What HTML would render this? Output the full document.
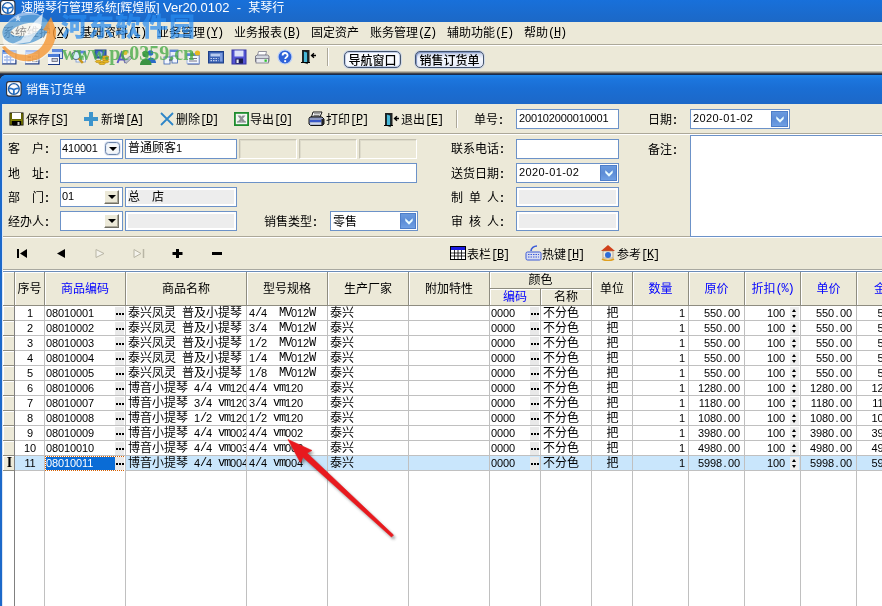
<!DOCTYPE html><html><head><meta charset="utf-8"><title>销售订货单</title><style>
*{box-sizing:border-box;margin:0;padding:0}
html,body{width:882px;height:606px;overflow:hidden;background:#ECE9D8}
body{will-change:transform;position:relative;font-family:"Liberation Sans","Noto Sans CJK SC",sans-serif;font-size:12px;color:#000;line-height:14px}
.a{position:absolute}
.t{position:absolute;white-space:nowrap;height:14px;line-height:14px;font-size:12px}
.sp{display:inline-block;width:6px}
.co{display:inline-block;width:6px;text-align:center;font-weight:bold}
.titlebar{left:0;top:0;width:882px;height:22px;background:linear-gradient(#1870DA,#1A6CD0 50%,#1C68C6)}
.inp{position:absolute;border:1px solid #6C92C8;background:#fff;height:20px;white-space:nowrap;overflow:hidden;line-height:17px;padding-left:2px;font-size:12px}
.inp.g{background:#EDEDED;box-shadow:inset 0 0 0 2px #fff}
.inp.n{font-size:11px}
.dis{position:absolute;height:20px;border:1px solid;border-color:#C5C2B2 #fff #fff #C5C2B2;background:#ECE9D8;box-shadow:inset 1px 1px 0 #DEDBCB}
.xpbtn{position:absolute;width:17px;height:16px;border:1px solid #4E7EC8;background:linear-gradient(#6A9ADE,#5C8CD6 50%,#6FA0E4)}
.xpbtn svg{position:absolute;left:3.500px;top:4px}
.clbtn{position:absolute;width:15px;height:14px;background:#ECE9D8;border:1px solid;border-color:#fff #716F64 #716F64 #fff;box-shadow:inset -1px -1px 0 #ACA899}
.clbtn:after{content:"";position:absolute;left:3px;top:4px;border:4px solid transparent;border-top:4px solid #000;border-bottom:0}
.hd{position:absolute;background:#ECE9D8;border-right:1px solid #8E8C80;border-bottom:1px solid #8E8C80;box-shadow:inset 1px 1px 0 #fff;text-align:center;font-size:12px;white-space:nowrap;overflow:hidden}
.blue{color:#0000FF}
.row{position:absolute;left:3px;width:879px;height:15px;border-bottom:1px solid #C0C0C0}
.row.sel{background:#C9E6FC}
.c{position:absolute;top:0;height:14px;line-height:15px;white-space:nowrap;overflow:hidden;font-size:12px}
.r{text-align:right}
.ctr{text-align:center}
.dots{position:absolute;top:1px;width:9px;height:13px;background:#E9E9E9}
.dots i{position:absolute;top:6px;width:2px;height:2px;background:#000}
.spn{position:absolute;left:787px;top:1px;width:9px;height:13px;background:#EFEFEF}
.spn:before{content:"";position:absolute;left:2px;top:2px;border:2.5px solid transparent;border-bottom:3px solid #000;border-top:0}
.spn:after{content:"";position:absolute;left:2px;top:8px;border:2.5px solid transparent;border-top:3px solid #000;border-bottom:0}
.vl{position:absolute;width:1px;background:#C0C0C0}
.tb{position:absolute;width:16px;height:16px;top:49px}
.m{font-family:"Liberation Mono","Noto Sans CJK SC",monospace;font-size:12px;letter-spacing:-1.2px;vertical-align:1px}
.d{font-family:"Liberation Sans",sans-serif;font-size:11px;letter-spacing:-.117px}
.dt{display:inline-block;width:6px;text-align:center;letter-spacing:0}
</style></head><body>
<div class="a titlebar"></div>
<svg class="a" style="left:0px;top:-0.5px" width="15.5" height="15.5" viewBox="0 0 16 16"><rect x=".6" y=".6" width="14.800" height="14.800" rx="2.600" fill="#FAFBFD" stroke="#2A2E3A" stroke-width="1.100"/><circle cx="8" cy="8.200" r="5.500" fill="none" stroke="#1C5CA8" stroke-width="1.400"/><path d="M2.900 7.700C5 7 6.500 7.900 8 9 9.500 7.900 11 7 13.100 7.700M8 9v4.600" stroke="#2470C8" stroke-width="1.800" fill="none"/></svg>
<div class="t" style="left:21px;top:0;color:#fff;height:16px;line-height:16px;font-size:12px">速腾琴行管理系统[辉煌版] <span style="font-size:13px">Ver20.0102&nbsp; -&nbsp; </span>某琴行</div>
<div class="a" style="left:0;top:44px;width:882px;height:1px;background:#ACA899"></div>
<div class="a" style="left:0;top:45px;width:882px;height:1px;background:#fff"></div>
<div class="t" style="left:3px;top:26px">系统维护<span class="m">(<u>X</u>)</span></div>
<div class="t" style="left:80px;top:26px">基础资料<span class="m">(<u>I</u>)</span></div>
<div class="t" style="left:157px;top:26px">业务管理<span class="m">(<u>Y</u>)</span></div>
<div class="t" style="left:234px;top:26px">业务报表<span class="m">(<u>B</u>)</span></div>
<div class="t" style="left:311px;top:26px">固定资产</div>
<div class="t" style="left:370px;top:26px">账务管理<span class="m">(<u>Z</u>)</span></div>
<div class="t" style="left:447px;top:26px">辅助功能<span class="m">(<u>F</u>)</span></div>
<div class="t" style="left:524px;top:26px">帮助<span class="m">(<u>H</u>)</span></div>
<svg class="tb" style="left:1px" viewBox="0 0 16 16"><rect x="1" y="1" width="14.500" height="14.500" fill="#1C3A84"/><rect x="1" y="1" width="13.300" height="13.300" fill="#F6F8FE"/><rect x="1" y="1" width="13.300" height="2" fill="#3E70D2"/><rect x="1" y="3" width="13.300" height="2" fill="#7FA6EA"/><rect x="1" y="1" width="1" height="13.300" fill="#8CAAE4"/><path d="M3 8h10M3 11h10M6 6v8M9.500 6v8" stroke="#A4BCEC" stroke-width="1.300"/></svg>
<svg class="tb" style="left:24px" viewBox="0 0 16 16"><rect x="1" y="1" width="14.500" height="14.500" fill="#1C3A84"/><rect x="1" y="1" width="13.300" height="13.300" fill="#F6F8FE"/><rect x="1" y="1" width="13.300" height="2" fill="#3E70D2"/><rect x="1" y="3" width="13.300" height="2" fill="#7FA6EA"/><rect x="1" y="1" width="1" height="13.300" fill="#8CAAE4"/><path d="M3.500 8h3.500M3.500 11.500h3.500" stroke="#333" stroke-width="1.300"/><rect x="8.500" y="7" width="4.500" height="2.200" fill="#fff" stroke="#555" stroke-width=".7"/><rect x="8.500" y="10.500" width="4.500" height="2.200" fill="#fff" stroke="#555" stroke-width=".7"/></svg>
<svg class="tb" style="left:47px" viewBox="0 0 16 16"><rect x="5" y="0" width="11" height="10" fill="#3A5CA8"/><rect x="5" y="0" width="10" height="9" fill="#D4E0F6"/><rect x="5" y="0" width="10" height="3" fill="#5B86DE"/><rect x="1" y="5" width="12" height="11" fill="#1C3A84"/><rect x="1" y="5" width="11" height="10" fill="#F6F8FE"/><rect x="1" y="5" width="11" height="3" fill="#4C7CD8"/><rect x="5" y="9.500" width="5.500" height="3" fill="#C4CCDC" stroke="#556" stroke-width=".7"/></svg>
<svg class="tb" style="left:70px" viewBox="0 0 16 16"><rect x="6" y="2" width="9.500" height="11" fill="#F2F6FD" stroke="#7C98D0" stroke-width=".8"/><rect x="6" y="2" width="9.500" height="2.500" fill="#5B86DE"/><rect x="10" y="7" width="4" height="4" fill="#9CCC9C"/><circle cx="6" cy="6.500" r="4" fill="#D6ECFC" stroke="#5A7088" stroke-width="1.200"/><path d="M8.800 9.500l4 4.500" stroke="#C8961E" stroke-width="2.600"/></svg>
<svg class="tb" style="left:94px" viewBox="0 0 16 16"><rect x="1" y="1" width="11" height="8" fill="#3C66C0" stroke="#1D3F88"/><circle cx="6" cy="5" r="2.500" fill="#8CB0E8"/><ellipse cx="11.500" cy="8" rx="3.500" ry="1.300" fill="#E8B820" stroke="#A87C10" stroke-width=".5"/><ellipse cx="11.500" cy="10.300" rx="3.500" ry="1.300" fill="#E8B820" stroke="#A87C10" stroke-width=".5"/><ellipse cx="11.500" cy="12.600" rx="3.500" ry="1.300" fill="#E8B820" stroke="#A87C10" stroke-width=".5"/><ellipse cx="4.500" cy="12.500" rx="3.200" ry="1.200" fill="#E8B820" stroke="#A87C10" stroke-width=".5"/><ellipse cx="8" cy="14.500" rx="3.200" ry="1.200" fill="#E8B820" stroke="#A87C10" stroke-width=".5"/></svg>
<svg class="tb" style="left:116px" viewBox="0 0 16 16"><path d="M1.500 14l4-10 4 10M3 10.500h5" stroke="#5A58C8" stroke-width="2" fill="none"/><path d="M8 12l6-5 2 2-6 5.500z" fill="#B8C0D0" stroke="#667" stroke-width=".6"/><circle cx="9" cy="3.500" r="2.500" fill="#D8C030"/></svg>
<svg class="tb" style="left:140px" viewBox="0 0 16 16"><circle cx="10.500" cy="4" r="2.800" fill="#2C6CC8"/><path d="M6 14c0-7 10-7 10 0z" fill="#2C6CC8"/><circle cx="5.500" cy="5" r="3.200" fill="#3C9444"/><path d="M0 16c0-8 11.500-8 11.500 0z" fill="#3C9444"/></svg>
<svg class="tb" style="left:163px" viewBox="0 0 16 16"><rect x="7" y="1" width="8" height="7" fill="#E8EEFA" stroke="#5878BC" stroke-width=".8"/><rect x="7" y="1" width="8" height="2" fill="#5B86DE"/><rect x="1" y="8" width="6" height="7" fill="#F2F6FD" stroke="#3B62B0" stroke-width=".8"/><rect x="9" y="7" width="5.500" height="7" fill="#F2F6FD" stroke="#3B62B0" stroke-width=".8"/><path d="M6 11h3" stroke="#345" stroke-width="1"/></svg>
<svg class="tb" style="left:186px" viewBox="0 0 16 16"><rect x="1.500" y="5.500" width="12" height="10" fill="#1E3C8C"/><rect x="1" y="4.500" width="12" height="10" fill="#F2F6FD" stroke="#8FA8DC" stroke-width=".8"/><rect x="1" y="4.500" width="12" height="2.500" fill="#5B86DE"/><path d="M3 9.500h8M3 12h8" stroke="#778" stroke-width="1"/><circle cx="11.500" cy="4" r="2.600" fill="#E8B820"/><path d="M6.500 2l2 5h-4z" fill="#6C9C3C"/></svg>
<svg class="tb" style="left:208px" viewBox="0 0 16 16"><rect x=".5" y="2.500" width="15" height="11.500" fill="#3A62B4" stroke="#1D3F88"/><rect x="2.500" y="4.500" width="11" height="3" fill="#B8CCF0"/><path d="M2.500 9.500h8M2.500 11.700h8" stroke="#C8D4F0" stroke-width="1.200" stroke-dasharray="1.500 1"/><rect x="12" y="4" width="2.500" height="8.500" fill="#7C9CE0"/></svg>
<svg class="tb" style="left:231px" viewBox="0 0 16 16"><rect x="1" y="1" width="14" height="14" fill="#5454D4" stroke="#3434A4"/><rect x="3.500" y="1.500" width="9" height="6" fill="#DCE0F8"/><rect x="4.500" y="9.500" width="7.500" height="5" fill="#1A1A50"/><rect x="5.500" y="10.500" width="2.200" height="3.500" fill="#E8ECF8"/></svg>
<svg class="tb" style="left:254px" viewBox="0 0 16 16"><path d="M4.500 2.500h8l-1 4h-8z" fill="#fff" stroke="#778" stroke-width=".8"/><path d="M1.500 7l2-1h10l1.500 1v5.500h-13.500z" fill="#D4D8E0" stroke="#667" stroke-width=".8"/><rect x="2" y="9.500" width="12.500" height="4.500" fill="#E8EAF0" stroke="#667" stroke-width=".7"/><rect x="10.500" y="10.500" width="2.300" height="2.300" fill="#2CC42C"/></svg>
<svg class="tb" style="left:277px" viewBox="0 0 16 16"><circle cx="8" cy="8" r="7" fill="#2E62D8" stroke="#C0D4F8" stroke-width="1.200"/><path d="M5.600 6.400c0-3.200 5-3.200 5 0 0 1.800-2.400 1.800-2.400 3.600" stroke="#fff" stroke-width="1.800" fill="none"/><rect x="7.200" y="11.200" width="1.900" height="1.900" fill="#fff"/></svg>
<svg class="tb" style="left:301px" viewBox="0 0 16 16"><path d="M1 1h7.500v12.500H1z" fill="#222"/><path d="M2.500 2l4 1.300v11.500l-4-1.500z" fill="#48B8D8" stroke="#000" stroke-width=".6"/><path d="M0 13.500h9" stroke="#000" stroke-width="1"/><path d="M15 6.500h-4.500M13 4.200l-2.500 2.300 2.500 2.300" stroke="#000" stroke-width="1.300" fill="none"/></svg>
<div class="a" style="left:327px;top:48px;width:1px;height:18px;background:#ACA899"></div><div class="a" style="left:328px;top:48px;width:1px;height:18px;background:#fff"></div>
<div class="a" style="left:344px;top:51px;width:57px;height:17px;border:1px solid #44546E;border-radius:5px;background:#F8FAFE;box-shadow:inset 0 0 0 1px #C4D0EA,0 0 0 1px rgba(200,212,236,.7);text-align:center;line-height:19px;font-size:12px;font-weight:500;white-space:nowrap;overflow:hidden">导航窗口</div>
<div class="a" style="left:415px;top:51px;width:69px;height:17px;border:1px solid #44546E;border-radius:5px;background:linear-gradient(#C0CCE8,#F4F7FD 45%,#E4EAF8);box-shadow:inset 1px 1px 1px 0 #7C90C0,0 0 0 1px rgba(200,212,236,.7);text-align:center;line-height:19px;font-size:12px;font-weight:500;white-space:nowrap;overflow:hidden">销售订货单</div>
<div class="a" style="left:0;top:71px;width:882px;height:5px;background:linear-gradient(#D4D1C0,#8E8C82 28%,#3A3E48 52%,#14284E 72%,#104CA8)"></div>
<div class="a" style="left:0;top:75px;width:882px;height:29px;background:linear-gradient(#1E88EC,#1C76DE 14%,#1A6ED4 45%,#1C69CA 90%,#1C68C8);border-top-left-radius:5px"></div>
<div class="a" style="left:0;top:75px;width:5px;height:5px;background:radial-gradient(circle at 5px 5px,transparent 4.500px,#1A2A48 5px)"></div>
<svg class="a" style="left:6px;top:81px" width="15.7" height="15.7" viewBox="0 0 16 16"><rect x=".6" y=".6" width="14.800" height="14.800" rx="2.600" fill="#FAFBFD" stroke="#2A2E3A" stroke-width="1.100"/><circle cx="8" cy="8.200" r="5.500" fill="none" stroke="#1C5CA8" stroke-width="1.400"/><path d="M2.900 7.700C5 7 6.500 7.900 8 9 9.500 7.900 11 7 13.100 7.700M8 9v4.600" stroke="#2470C8" stroke-width="1.800" fill="none"/></svg>
<div class="t" style="left:26px;top:82px;color:#fff;height:16px;line-height:16px">销售订货单</div>
<div class="a" style="left:0;top:104px;width:2px;height:502px;background:#1C69CA"></div>
<div class="a" style="left:2px;top:104px;width:1px;height:502px;background:#DCE6F4"></div>
<svg class="a" style="left:9px;top:112px" width="15" height="14" viewBox="0 0 15 14"><rect x=".5" y=".5" width="14" height="13" fill="#000"/><rect x="3" y="1" width="9" height="6" fill="#fff"/><rect x="1.300" y="1.300" width="1.400" height="11.400" fill="#8C8C00"/><rect x="12.300" y="1.300" width="1.400" height="11.400" fill="#8C8C00"/><rect x="2" y="7.300" width="11" height="1.600" fill="#8C8C00"/><rect x="4" y="9.500" width="7" height="4" fill="#000"/><rect x="8.500" y="10" width="2" height="3" fill="#C8C8C8"/></svg>
<div class="t" style="left:26px;top:113px">保存<span class="m">[<u>S</u>]</span></div>
<svg class="a" style="left:84px;top:112px" width="14" height="14" viewBox="0 0 14 14"><path d="M5 0h4v5h5v4H9v5H5V9H0V5h5z" fill="#3C94CC"/></svg>
<div class="t" style="left:101px;top:113px">新增<span class="m">[<u>A</u>]</span></div>
<svg class="a" style="left:160px;top:112px" width="14" height="14" viewBox="0 0 14 14"><path d="M1 1l12 12M13 1L1 13" stroke="#2E86C8" stroke-width="1.800" fill="none"/></svg>
<div class="t" style="left:176px;top:113px">删除<span class="m">[<u>D</u>]</span></div>
<svg class="a" style="left:234px;top:112px" width="15" height="14" viewBox="0 0 15 14"><rect x=".9" y=".9" width="13.200" height="12.200" fill="#F4F6F4" stroke="#1E8C2E" stroke-width="1.800"/><path d="M3.500 3.500h3l5 6.500h-3zM3.500 10l2.800-3.200 1.400 1.600L6.500 10zM11.500 3.500l-2.600 3-1.400-1.700 1-1.300z" fill="#8C9094"/><rect x="3" y="9.300" width="9" height="1.300" fill="#8C9094"/></svg>
<div class="t" style="left:250px;top:113px">导出<span class="m">[<u>O</u>]</span></div>
<svg class="a" style="left:308px;top:111px" width="17" height="16" viewBox="0 0 17 16"><path d="M5 1h9l-2 5H3.500z" fill="#fff" stroke="#111" stroke-width="1"/><path d="M6 2.800h6M5.500 4.500h6" stroke="#555" stroke-width=".8"/><path d="M2 6h12l2 2v5l-1.500 1.500H2.500L1 13V7.500z" fill="#8C98C0" stroke="#111" stroke-width="1"/><rect x="1.800" y="9" width="11.500" height="2.200" fill="#3858C8"/><rect x="2.200" y="11.500" width="11" height="2" fill="#D0D8E8"/><path d="M13.500 8h2.500v5l-1.500 1.500h-1z" fill="#222"/></svg>
<div class="t" style="left:326px;top:113px">打印<span class="m">[<u>P</u>]</span></div>
<svg class="a" style="left:384px;top:112px" width="16" height="16" viewBox="0 0 16 16"><path d="M1 1h7.500v12.500H1z" fill="#222"/><path d="M2.500 2l4 1.300v11.500l-4-1.500z" fill="#48B8D8" stroke="#000" stroke-width=".6"/><path d="M0 13.500h9" stroke="#000" stroke-width="1"/><path d="M15 6.500h-4.500M13 4.200l-2.500 2.300 2.500 2.300" stroke="#000" stroke-width="1.300" fill="none"/></svg>
<div class="t" style="left:401px;top:113px">退出<span class="m">[<u>E</u>]</span></div>
<div class="a" style="left:456px;top:110px;width:1px;height:18px;background:#ACA899"></div><div class="a" style="left:457px;top:110px;width:1px;height:18px;background:#fff"></div>
<div class="t" style="left:474px;top:113px">单号<span class="co">:</span></div>
<div class="inp n" style="left:516px;top:109px;width:103px;letter-spacing:-.15px">200102000010001</div>
<div class="t" style="left:648px;top:113px">日期<span class="co">:</span></div>
<div class="inp n" style="left:690px;top:109px;width:100px;letter-spacing:.4px">2020-01-02</div><div class="xpbtn" style="left:771px;top:111px"><svg width="8" height="7" viewBox="0 0 8 7"><path d="M.3 .3L4 3.800 7.700 .3V3L4 6.700 .3 3z" fill="#EAFCFF"/></svg></div>
<div class="a" style="left:3px;top:133px;width:879px;height:1px;background:#ACA899"></div>
<div class="a" style="left:3px;top:134px;width:879px;height:1px;background:#fff"></div>
<div class="t" style="left:8px;top:142px">客<span class="sp"></span><span class="sp"></span>户<span class="co">:</span></div>
<div class="t" style="left:8px;top:167px">地<span class="sp"></span><span class="sp"></span>址<span class="co">:</span></div>
<div class="t" style="left:8px;top:191px">部<span class="sp"></span><span class="sp"></span>门<span class="co">:</span></div>
<div class="t" style="left:8px;top:215px">经办人<span class="co">:</span></div>
<div class="inp n" style="left:60px;top:139px;width:63px;padding-left:1px;letter-spacing:-.15px">410001</div>
<div class="a" style="left:105px;top:142px;width:15px;height:13px;border:1px solid #6C84A8;border-radius:3.500px;background:#F4F6F8;box-shadow:inset 0 0 0 1px #E4ECF8,0 0 0 1px rgba(220,228,244,.8)"></div><div class="a" style="left:109px;top:147px;border:4px solid transparent;border-top:4px solid #000;border-bottom:0"></div>
<div class="inp" style="left:125px;top:139px;width:112px">普通顾客<span class="d">1</span></div>
<div class="dis" style="left:239px;top:139px;width:58px"></div>
<div class="dis" style="left:299px;top:139px;width:58px"></div>
<div class="dis" style="left:359px;top:139px;width:58px"></div>
<div class="inp" style="left:60px;top:163px;width:357px"></div>
<div class="inp n" style="left:60px;top:187px;width:63px;padding-left:1px">01</div><div class="clbtn" style="left:104px;top:190px"></div>
<div class="inp g" style="left:125px;top:187px;width:112px;line-height:19px">总<span class="sp"></span><span class="sp"></span>店</div>
<div class="inp" style="left:60px;top:211px;width:63px"></div><div class="clbtn" style="left:104px;top:214px"></div>
<div class="inp g" style="left:125px;top:211px;width:112px"></div>
<div class="t" style="left:264px;top:215px">销售类型<span class="co">:</span></div>
<div class="inp" style="left:330px;top:211px;width:88px;line-height:20px">零售</div><div class="xpbtn" style="left:400px;top:213px;width:16px"><svg width="8" height="7" viewBox="0 0 8 7"><path d="M.3 .3L4 3.800 7.700 .3V3L4 6.700 .3 3z" fill="#EAFCFF"/></svg></div>
<div class="t" style="left:451px;top:142px">联系电话<span class="co">:</span></div>
<div class="t" style="left:451px;top:167px">送货日期<span class="co">:</span></div>
<div class="t" style="left:451px;top:191px">制<span class="sp"></span>单<span class="sp"></span>人<span class="co">:</span></div>
<div class="t" style="left:451px;top:215px">审<span class="sp"></span>核<span class="sp"></span>人<span class="co">:</span></div>
<div class="inp" style="left:516px;top:139px;width:103px"></div>
<div class="inp n" style="left:516px;top:163px;width:103px;letter-spacing:.4px">2020-01-02</div><div class="xpbtn" style="left:600px;top:165px"><svg width="8" height="7" viewBox="0 0 8 7"><path d="M.3 .3L4 3.800 7.700 .3V3L4 6.700 .3 3z" fill="#EAFCFF"/></svg></div>
<div class="inp g" style="left:516px;top:187px;width:103px"></div>
<div class="inp g" style="left:516px;top:211px;width:103px"></div>
<div class="t" style="left:648px;top:143px">备注<span class="co">:</span></div>
<div class="inp" style="left:690px;top:135px;width:200px;height:102px"></div>
<div class="a" style="left:3px;top:236px;width:687px;height:1px;background:#ACA899"></div>
<div class="a" style="left:3px;top:237px;width:879px;height:1px;background:#fff"></div>
<svg class="a" style="left:17px;top:249px" width="210" height="9" viewBox="0 0 210 9"><path d="M0 0h2v9H0zM10 0v9L3 4.500z" fill="#000"/><path d="M48 0v9L40 4.500z" fill="#000"/><path d="M79 .5v8L87 4.500z" fill="#F4F3EC" stroke="#B8B5A4"/><path d="M117 .5v8L124 4.500z" fill="#F4F3EC" stroke="#B8B5A4"/><path d="M126.500 0v9" stroke="#B8B5A4" stroke-width="1.500"/><path d="M159 0h3v3h3.500v3H162V9h-3V6h-3.500V3H159z" fill="#000"/><path d="M195 3h10v3h-10z" fill="#000"/></svg>
<svg class="a" style="left:450px;top:246px" width="16" height="14" viewBox="0 0 16 14"><rect x=".5" y=".5" width="15" height="13" fill="#fff" stroke="#000"/><rect x="1" y="1" width="14" height="3" fill="#1A1AE0"/><path d="M1 7h14M1 10h14M4.500 4v9M8 4v9M11.500 4v9" stroke="#000" stroke-width=".8"/></svg>
<div class="t" style="left:467px;top:248px">表栏<span class="m">[<u>B</u>]</span></div>
<svg class="a" style="left:525px;top:245px" width="18" height="16" viewBox="0 0 18 16"><path d="M12 1c-3 0-6 2-6 5" stroke="#3A5AD8" stroke-width="1.600" fill="none"/><rect x="1" y="7" width="15" height="8" rx="1.500" fill="#D8DCF0" stroke="#3A5AD8"/><path d="M3 9.500h11M3 12h11" stroke="#3A5AD8" stroke-width="1" stroke-dasharray="1.500 1"/></svg>
<div class="t" style="left:542px;top:248px">热键<span class="m">[<u>H</u>]</span></div>
<svg class="a" style="left:600px;top:244px" width="16" height="17" viewBox="0 0 16 17"><path d="M1 7l7-6 7 6z" fill="#D0401A"/><rect x="3" y="7" width="10" height="7" fill="#F0ECE0" stroke="#A08060" stroke-width=".6"/><circle cx="8" cy="11" r="3" fill="#2E6CD8"/><path d="M2 15c3 2 9 2 12 0" stroke="#E0A020" stroke-width="1.600" fill="none"/></svg>
<div class="t" style="left:617px;top:248px">参考<span class="m">[<u>K</u>]</span></div>
<div class="a" style="left:3px;top:269px;width:879px;height:1px;background:#A8A8A0"></div>
<div class="a" style="left:3px;top:270px;width:879px;height:1px;background:#fff"></div>
<div class="a" style="left:3px;top:271px;width:879px;height:1px;background:#6C8CB8"></div>
<div class="a" style="left:3px;top:272px;width:879px;height:334px;background:#fff"></div>
<div class="hd" style="left:3px;top:272px;width:12px;height:34px;line-height:34px"></div>
<div class="hd" style="left:15px;top:272px;width:30px;height:34px;line-height:34px">序号</div>
<div class="hd blue" style="left:45px;top:272px;width:81px;height:34px;line-height:34px">商品编码</div>
<div class="hd" style="left:126px;top:272px;width:121px;height:34px;line-height:34px">商品名称</div>
<div class="hd" style="left:247px;top:272px;width:81px;height:34px;line-height:34px">型号规格</div>
<div class="hd" style="left:328px;top:272px;width:81px;height:34px;line-height:34px">生产厂家</div>
<div class="hd" style="left:409px;top:272px;width:81px;height:34px;line-height:34px">附加特性</div>
<div class="hd" style="left:490px;top:272px;width:102px;height:17px;line-height:17px">颜色</div>
<div class="hd blue" style="left:490px;top:289px;width:51px;height:17px;line-height:17px">编码</div>
<div class="hd" style="left:541px;top:289px;width:51px;height:17px;line-height:17px">名称</div>
<div class="hd" style="left:592px;top:272px;width:41px;height:34px;line-height:34px">单位</div>
<div class="hd blue" style="left:633px;top:272px;width:56px;height:34px;line-height:34px">数量</div>
<div class="hd blue" style="left:689px;top:272px;width:56px;height:34px;line-height:34px">原价</div>
<div class="hd blue" style="left:745px;top:272px;width:56px;height:34px;line-height:34px">折扣<span class="m">(%)</span></div>
<div class="hd blue" style="left:801px;top:272px;width:56px;height:34px;line-height:34px">单价</div>
<div class="hd blue" style="left:857px;top:272px;width:40px;height:34px;line-height:35px;text-align:left;padding-left:17px">金额</div>
<div class="row" style="top:306px">
<span class="c" style="left:0;width:12px;height:15px;background:#ECE9D8;border-right:1px solid #8E8C80;border-bottom:1px solid #8E8C80;box-shadow:inset 1px 1px 0 #fff"></span>
<span class="c d ctr" style="left:12px;width:30px">1</span>
<span class="c d" style="left:43px;width:60px">08010001</span>
<span class="dots" style="left:112px"><i style="left:1px"></i><i style="left:4px"></i><i style="left:7px"></i></span>
<span class="c" style="left:125px;width:118px">泰兴凤灵<span class="sp"></span>普及小提琴</span>
<span class="c" style="left:246px;width:78px"><span class="d">4</span><span class="m">/</span><span class="d">4</span><span class="sp"></span><span class="sp"></span><span class="m">MV</span><span class="d">012</span><span class="m">W</span></span>
<span class="c" style="left:327px;width:70px">泰兴</span>
<span class="c d" style="left:488px;width:38px">0000</span>
<span class="dots" style="left:527px"><i style="left:1px"></i><i style="left:4px"></i><i style="left:7px"></i></span>
<span class="c" style="left:540px;width:48px">不分色</span>
<span class="c ctr" style="left:589px;width:41px">把</span>
<span class="c d r" style="left:630px;width:52px">1</span>
<span class="c d r" style="left:686px;width:51px">550<span class="dt">.</span>00</span>
<span class="c d r" style="left:742px;width:40px">100</span>
<span class="spn"></span>
<span class="c d r" style="left:798px;width:51px">550<span class="dt">.</span>00</span>
<span class="c d r" style="left:856px;width:54.500px">550<span class="dt">.</span>00</span>
</div>
<div class="row" style="top:321px">
<span class="c" style="left:0;width:12px;height:15px;background:#ECE9D8;border-right:1px solid #8E8C80;border-bottom:1px solid #8E8C80;box-shadow:inset 1px 1px 0 #fff"></span>
<span class="c d ctr" style="left:12px;width:30px">2</span>
<span class="c d" style="left:43px;width:60px">08010002</span>
<span class="dots" style="left:112px"><i style="left:1px"></i><i style="left:4px"></i><i style="left:7px"></i></span>
<span class="c" style="left:125px;width:118px">泰兴凤灵<span class="sp"></span>普及小提琴</span>
<span class="c" style="left:246px;width:78px"><span class="d">3</span><span class="m">/</span><span class="d">4</span><span class="sp"></span><span class="sp"></span><span class="m">MV</span><span class="d">012</span><span class="m">W</span></span>
<span class="c" style="left:327px;width:70px">泰兴</span>
<span class="c d" style="left:488px;width:38px">0000</span>
<span class="dots" style="left:527px"><i style="left:1px"></i><i style="left:4px"></i><i style="left:7px"></i></span>
<span class="c" style="left:540px;width:48px">不分色</span>
<span class="c ctr" style="left:589px;width:41px">把</span>
<span class="c d r" style="left:630px;width:52px">1</span>
<span class="c d r" style="left:686px;width:51px">550<span class="dt">.</span>00</span>
<span class="c d r" style="left:742px;width:40px">100</span>
<span class="spn"></span>
<span class="c d r" style="left:798px;width:51px">550<span class="dt">.</span>00</span>
<span class="c d r" style="left:856px;width:54.500px">550<span class="dt">.</span>00</span>
</div>
<div class="row" style="top:336px">
<span class="c" style="left:0;width:12px;height:15px;background:#ECE9D8;border-right:1px solid #8E8C80;border-bottom:1px solid #8E8C80;box-shadow:inset 1px 1px 0 #fff"></span>
<span class="c d ctr" style="left:12px;width:30px">3</span>
<span class="c d" style="left:43px;width:60px">08010003</span>
<span class="dots" style="left:112px"><i style="left:1px"></i><i style="left:4px"></i><i style="left:7px"></i></span>
<span class="c" style="left:125px;width:118px">泰兴凤灵<span class="sp"></span>普及小提琴</span>
<span class="c" style="left:246px;width:78px"><span class="d">1</span><span class="m">/</span><span class="d">2</span><span class="sp"></span><span class="sp"></span><span class="m">MV</span><span class="d">012</span><span class="m">W</span></span>
<span class="c" style="left:327px;width:70px">泰兴</span>
<span class="c d" style="left:488px;width:38px">0000</span>
<span class="dots" style="left:527px"><i style="left:1px"></i><i style="left:4px"></i><i style="left:7px"></i></span>
<span class="c" style="left:540px;width:48px">不分色</span>
<span class="c ctr" style="left:589px;width:41px">把</span>
<span class="c d r" style="left:630px;width:52px">1</span>
<span class="c d r" style="left:686px;width:51px">550<span class="dt">.</span>00</span>
<span class="c d r" style="left:742px;width:40px">100</span>
<span class="spn"></span>
<span class="c d r" style="left:798px;width:51px">550<span class="dt">.</span>00</span>
<span class="c d r" style="left:856px;width:54.500px">550<span class="dt">.</span>00</span>
</div>
<div class="row" style="top:351px">
<span class="c" style="left:0;width:12px;height:15px;background:#ECE9D8;border-right:1px solid #8E8C80;border-bottom:1px solid #8E8C80;box-shadow:inset 1px 1px 0 #fff"></span>
<span class="c d ctr" style="left:12px;width:30px">4</span>
<span class="c d" style="left:43px;width:60px">08010004</span>
<span class="dots" style="left:112px"><i style="left:1px"></i><i style="left:4px"></i><i style="left:7px"></i></span>
<span class="c" style="left:125px;width:118px">泰兴凤灵<span class="sp"></span>普及小提琴</span>
<span class="c" style="left:246px;width:78px"><span class="d">1</span><span class="m">/</span><span class="d">4</span><span class="sp"></span><span class="sp"></span><span class="m">MV</span><span class="d">012</span><span class="m">W</span></span>
<span class="c" style="left:327px;width:70px">泰兴</span>
<span class="c d" style="left:488px;width:38px">0000</span>
<span class="dots" style="left:527px"><i style="left:1px"></i><i style="left:4px"></i><i style="left:7px"></i></span>
<span class="c" style="left:540px;width:48px">不分色</span>
<span class="c ctr" style="left:589px;width:41px">把</span>
<span class="c d r" style="left:630px;width:52px">1</span>
<span class="c d r" style="left:686px;width:51px">550<span class="dt">.</span>00</span>
<span class="c d r" style="left:742px;width:40px">100</span>
<span class="spn"></span>
<span class="c d r" style="left:798px;width:51px">550<span class="dt">.</span>00</span>
<span class="c d r" style="left:856px;width:54.500px">550<span class="dt">.</span>00</span>
</div>
<div class="row" style="top:366px">
<span class="c" style="left:0;width:12px;height:15px;background:#ECE9D8;border-right:1px solid #8E8C80;border-bottom:1px solid #8E8C80;box-shadow:inset 1px 1px 0 #fff"></span>
<span class="c d ctr" style="left:12px;width:30px">5</span>
<span class="c d" style="left:43px;width:60px">08010005</span>
<span class="dots" style="left:112px"><i style="left:1px"></i><i style="left:4px"></i><i style="left:7px"></i></span>
<span class="c" style="left:125px;width:118px">泰兴凤灵<span class="sp"></span>普及小提琴</span>
<span class="c" style="left:246px;width:78px"><span class="d">1</span><span class="m">/</span><span class="d">8</span><span class="sp"></span><span class="sp"></span><span class="m">MV</span><span class="d">012</span><span class="m">W</span></span>
<span class="c" style="left:327px;width:70px">泰兴</span>
<span class="c d" style="left:488px;width:38px">0000</span>
<span class="dots" style="left:527px"><i style="left:1px"></i><i style="left:4px"></i><i style="left:7px"></i></span>
<span class="c" style="left:540px;width:48px">不分色</span>
<span class="c ctr" style="left:589px;width:41px">把</span>
<span class="c d r" style="left:630px;width:52px">1</span>
<span class="c d r" style="left:686px;width:51px">550<span class="dt">.</span>00</span>
<span class="c d r" style="left:742px;width:40px">100</span>
<span class="spn"></span>
<span class="c d r" style="left:798px;width:51px">550<span class="dt">.</span>00</span>
<span class="c d r" style="left:856px;width:54.500px">550<span class="dt">.</span>00</span>
</div>
<div class="row" style="top:381px">
<span class="c" style="left:0;width:12px;height:15px;background:#ECE9D8;border-right:1px solid #8E8C80;border-bottom:1px solid #8E8C80;box-shadow:inset 1px 1px 0 #fff"></span>
<span class="c d ctr" style="left:12px;width:30px">6</span>
<span class="c d" style="left:43px;width:60px">08010006</span>
<span class="dots" style="left:112px"><i style="left:1px"></i><i style="left:4px"></i><i style="left:7px"></i></span>
<span class="c" style="left:125px;width:118px">博音小提琴<span class="sp"></span><span class="d">4</span><span class="m">/</span><span class="d">4</span><span class="sp"></span><span class="m">vm</span><span class="d">120</span></span>
<span class="c" style="left:246px;width:78px"><span class="d">4</span><span class="m">/</span><span class="d">4</span><span class="sp"></span><span class="m">vm</span><span class="d">120</span></span>
<span class="c" style="left:327px;width:70px">泰兴</span>
<span class="c d" style="left:488px;width:38px">0000</span>
<span class="dots" style="left:527px"><i style="left:1px"></i><i style="left:4px"></i><i style="left:7px"></i></span>
<span class="c" style="left:540px;width:48px">不分色</span>
<span class="c ctr" style="left:589px;width:41px">把</span>
<span class="c d r" style="left:630px;width:52px">1</span>
<span class="c d r" style="left:686px;width:51px">1280<span class="dt">.</span>00</span>
<span class="c d r" style="left:742px;width:40px">100</span>
<span class="spn"></span>
<span class="c d r" style="left:798px;width:51px">1280<span class="dt">.</span>00</span>
<span class="c d r" style="left:856px;width:54.500px">1280<span class="dt">.</span>00</span>
</div>
<div class="row" style="top:396px">
<span class="c" style="left:0;width:12px;height:15px;background:#ECE9D8;border-right:1px solid #8E8C80;border-bottom:1px solid #8E8C80;box-shadow:inset 1px 1px 0 #fff"></span>
<span class="c d ctr" style="left:12px;width:30px">7</span>
<span class="c d" style="left:43px;width:60px">08010007</span>
<span class="dots" style="left:112px"><i style="left:1px"></i><i style="left:4px"></i><i style="left:7px"></i></span>
<span class="c" style="left:125px;width:118px">博音小提琴<span class="sp"></span><span class="d">3</span><span class="m">/</span><span class="d">4</span><span class="sp"></span><span class="m">vm</span><span class="d">120</span></span>
<span class="c" style="left:246px;width:78px"><span class="d">3</span><span class="m">/</span><span class="d">4</span><span class="sp"></span><span class="m">vm</span><span class="d">120</span></span>
<span class="c" style="left:327px;width:70px">泰兴</span>
<span class="c d" style="left:488px;width:38px">0000</span>
<span class="dots" style="left:527px"><i style="left:1px"></i><i style="left:4px"></i><i style="left:7px"></i></span>
<span class="c" style="left:540px;width:48px">不分色</span>
<span class="c ctr" style="left:589px;width:41px">把</span>
<span class="c d r" style="left:630px;width:52px">1</span>
<span class="c d r" style="left:686px;width:51px">1180<span class="dt">.</span>00</span>
<span class="c d r" style="left:742px;width:40px">100</span>
<span class="spn"></span>
<span class="c d r" style="left:798px;width:51px">1180<span class="dt">.</span>00</span>
<span class="c d r" style="left:856px;width:54.500px">1180<span class="dt">.</span>00</span>
</div>
<div class="row" style="top:411px">
<span class="c" style="left:0;width:12px;height:15px;background:#ECE9D8;border-right:1px solid #8E8C80;border-bottom:1px solid #8E8C80;box-shadow:inset 1px 1px 0 #fff"></span>
<span class="c d ctr" style="left:12px;width:30px">8</span>
<span class="c d" style="left:43px;width:60px">08010008</span>
<span class="dots" style="left:112px"><i style="left:1px"></i><i style="left:4px"></i><i style="left:7px"></i></span>
<span class="c" style="left:125px;width:118px">博音小提琴<span class="sp"></span><span class="d">1</span><span class="m">/</span><span class="d">2</span><span class="sp"></span><span class="m">vm</span><span class="d">120</span></span>
<span class="c" style="left:246px;width:78px"><span class="d">1</span><span class="m">/</span><span class="d">2</span><span class="sp"></span><span class="m">vm</span><span class="d">120</span></span>
<span class="c" style="left:327px;width:70px">泰兴</span>
<span class="c d" style="left:488px;width:38px">0000</span>
<span class="dots" style="left:527px"><i style="left:1px"></i><i style="left:4px"></i><i style="left:7px"></i></span>
<span class="c" style="left:540px;width:48px">不分色</span>
<span class="c ctr" style="left:589px;width:41px">把</span>
<span class="c d r" style="left:630px;width:52px">1</span>
<span class="c d r" style="left:686px;width:51px">1080<span class="dt">.</span>00</span>
<span class="c d r" style="left:742px;width:40px">100</span>
<span class="spn"></span>
<span class="c d r" style="left:798px;width:51px">1080<span class="dt">.</span>00</span>
<span class="c d r" style="left:856px;width:54.500px">1080<span class="dt">.</span>00</span>
</div>
<div class="row" style="top:426px">
<span class="c" style="left:0;width:12px;height:15px;background:#ECE9D8;border-right:1px solid #8E8C80;border-bottom:1px solid #8E8C80;box-shadow:inset 1px 1px 0 #fff"></span>
<span class="c d ctr" style="left:12px;width:30px">9</span>
<span class="c d" style="left:43px;width:60px">08010009</span>
<span class="dots" style="left:112px"><i style="left:1px"></i><i style="left:4px"></i><i style="left:7px"></i></span>
<span class="c" style="left:125px;width:118px">博音小提琴<span class="sp"></span><span class="d">4</span><span class="m">/</span><span class="d">4</span><span class="sp"></span><span class="m">vm</span><span class="d">002</span></span>
<span class="c" style="left:246px;width:78px"><span class="d">4</span><span class="m">/</span><span class="d">4</span><span class="sp"></span><span class="m">vm</span><span class="d">002</span></span>
<span class="c" style="left:327px;width:70px">泰兴</span>
<span class="c d" style="left:488px;width:38px">0000</span>
<span class="dots" style="left:527px"><i style="left:1px"></i><i style="left:4px"></i><i style="left:7px"></i></span>
<span class="c" style="left:540px;width:48px">不分色</span>
<span class="c ctr" style="left:589px;width:41px">把</span>
<span class="c d r" style="left:630px;width:52px">1</span>
<span class="c d r" style="left:686px;width:51px">3980<span class="dt">.</span>00</span>
<span class="c d r" style="left:742px;width:40px">100</span>
<span class="spn"></span>
<span class="c d r" style="left:798px;width:51px">3980<span class="dt">.</span>00</span>
<span class="c d r" style="left:856px;width:54.500px">3980<span class="dt">.</span>00</span>
</div>
<div class="row" style="top:441px">
<span class="c" style="left:0;width:12px;height:15px;background:#ECE9D8;border-right:1px solid #8E8C80;border-bottom:1px solid #8E8C80;box-shadow:inset 1px 1px 0 #fff"></span>
<span class="c d ctr" style="left:12px;width:30px">10</span>
<span class="c d" style="left:43px;width:60px">08010010</span>
<span class="dots" style="left:112px"><i style="left:1px"></i><i style="left:4px"></i><i style="left:7px"></i></span>
<span class="c" style="left:125px;width:118px">博音小提琴<span class="sp"></span><span class="d">4</span><span class="m">/</span><span class="d">4</span><span class="sp"></span><span class="m">vm</span><span class="d">003</span></span>
<span class="c" style="left:246px;width:78px"><span class="d">4</span><span class="m">/</span><span class="d">4</span><span class="sp"></span><span class="m">vm</span><span class="d">003</span></span>
<span class="c" style="left:327px;width:70px">泰兴</span>
<span class="c d" style="left:488px;width:38px">0000</span>
<span class="dots" style="left:527px"><i style="left:1px"></i><i style="left:4px"></i><i style="left:7px"></i></span>
<span class="c" style="left:540px;width:48px">不分色</span>
<span class="c ctr" style="left:589px;width:41px">把</span>
<span class="c d r" style="left:630px;width:52px">1</span>
<span class="c d r" style="left:686px;width:51px">4980<span class="dt">.</span>00</span>
<span class="c d r" style="left:742px;width:40px">100</span>
<span class="spn"></span>
<span class="c d r" style="left:798px;width:51px">4980<span class="dt">.</span>00</span>
<span class="c d r" style="left:856px;width:54.500px">4980<span class="dt">.</span>00</span>
</div>
<div class="row sel" style="top:456px">
<span class="c" style="left:0;width:12px;height:15px;background:#ECE9D8;border-right:1px solid #8E8C80;border-bottom:1px solid #8E8C80;box-shadow:inset 1px 1px 0 #fff"></span>
<span class="c d ctr" style="left:12px;width:30px">11</span>
<span class="c" style="left:42px;width:81px;height:15px;top:0;outline:1px dotted #D86000;outline-offset:-1px;background:#fff"></span><span class="c d" style="left:43px;width:70px;top:1px;height:13px;line-height:13px;background:#0A6CD6;color:#fff;padding-left:0">08010011</span>
<span class="dots" style="left:112px"><i style="left:1px"></i><i style="left:4px"></i><i style="left:7px"></i></span>
<span class="c" style="left:125px;width:118px">博音小提琴<span class="sp"></span><span class="d">4</span><span class="m">/</span><span class="d">4</span><span class="sp"></span><span class="m">vm</span><span class="d">004</span></span>
<span class="c" style="left:246px;width:78px"><span class="d">4</span><span class="m">/</span><span class="d">4</span><span class="sp"></span><span class="m">vm</span><span class="d">004</span></span>
<span class="c" style="left:327px;width:70px">泰兴</span>
<span class="c d" style="left:488px;width:38px">0000</span>
<span class="dots" style="left:527px"><i style="left:1px"></i><i style="left:4px"></i><i style="left:7px"></i></span>
<span class="c" style="left:540px;width:48px">不分色</span>
<span class="c ctr" style="left:589px;width:41px">把</span>
<span class="c d r" style="left:630px;width:52px">1</span>
<span class="c d r" style="left:686px;width:51px">5998<span class="dt">.</span>00</span>
<span class="c d r" style="left:742px;width:40px">100</span>
<span class="spn"></span>
<span class="c d r" style="left:798px;width:51px">5998<span class="dt">.</span>00</span>
<span class="c d r" style="left:856px;width:54.500px">5998<span class="dt">.</span>00</span>
</div>
<div class="t" style="left:5px;top:456px;font-family:'Liberation Serif',serif;font-weight:bold;font-size:14px;width:9px;text-align:center">I</div>
<div class="vl" style="left:14px;top:306px;height:300px;background:#808080"></div>
<div class="vl" style="left:44px;top:306px;height:300px;background:#C0C0C0"></div>
<div class="vl" style="left:125px;top:306px;height:300px;background:#C0C0C0"></div>
<div class="vl" style="left:246px;top:306px;height:300px;background:#C0C0C0"></div>
<div class="vl" style="left:327px;top:306px;height:300px;background:#C0C0C0"></div>
<div class="vl" style="left:408px;top:306px;height:300px;background:#C0C0C0"></div>
<div class="vl" style="left:489px;top:306px;height:300px;background:#C0C0C0"></div>
<div class="vl" style="left:540px;top:306px;height:300px;background:#C0C0C0"></div>
<div class="vl" style="left:591px;top:306px;height:300px;background:#C0C0C0"></div>
<div class="vl" style="left:632px;top:306px;height:300px;background:#C0C0C0"></div>
<div class="vl" style="left:688px;top:306px;height:300px;background:#C0C0C0"></div>
<div class="vl" style="left:744px;top:306px;height:300px;background:#C0C0C0"></div>
<div class="vl" style="left:800px;top:306px;height:300px;background:#C0C0C0"></div>
<div class="vl" style="left:856px;top:306px;height:300px;background:#C0C0C0"></div>
<svg class="a" style="left:270px;top:420px" width="150" height="140" viewBox="270 420 150 140"><defs><filter id="sh" x="-20%" y="-20%" width="140%" height="140%"><feGaussianBlur stdDeviation="1.600"/></filter></defs><g transform="translate(2,2.500)" filter="url(#sh)" opacity=".55"><path d="M288 439.500L312 450.500 307 453 393.500 535 391.500 537 303 457.300 300.500 462.700z" fill="#333"/></g><path d="M288 439.500L312 450.500 307 453 393.500 535 391.500 537 303 457.300 300.500 462.700z" fill="#E8191E" stroke="#E8191E" stroke-width=".6" stroke-linejoin="round"/></svg>
<svg class="a" style="left:0;top:8px" width="62" height="60" viewBox="0 8 62 60"><circle cx="28" cy="37.500" r="25.500" fill="rgba(255,255,255,.55)"/><g transform="rotate(-13 26 29.500)"><ellipse cx="26" cy="29.500" rx="20" ry="10" fill="none" stroke="rgba(40,130,205,.62)" stroke-width="8"/></g><path d="M10 45L21 40 34 22 43 13 41 27 30 42z" fill="rgba(255,255,255,.7)"/><path d="M2 47C8 58 22 64 36 60 48 56 57 44 56 30L51 17 43 30 47 31C47 40 42 49 33 53 24 57 12 54 5 46z" fill="rgba(245,150,50,.8)"/><path d="M18 15l1 2.500h2.500l-2 1.600.8 2.500-2.300-1.500-2.300 1.500.8-2.500-2-1.600h2.500z" fill="rgba(255,255,255,.7)"/></svg>
<div class="t" style="left:61px;top:12px;height:30px;line-height:30px;font-size:26px;letter-spacing:1px;font-weight:900;color:rgba(40,140,240,.72);font-family:'Liberation Sans','Noto Sans CJK SC',sans-serif">河东软件园</div>
<div class="t" style="left:62px;top:41px;height:24px;line-height:24px;font-size:20px;font-weight:bold;color:rgba(70,170,70,.78);font-family:'Liberation Serif',serif">www.pc0359.cn</div>
</body></html>
